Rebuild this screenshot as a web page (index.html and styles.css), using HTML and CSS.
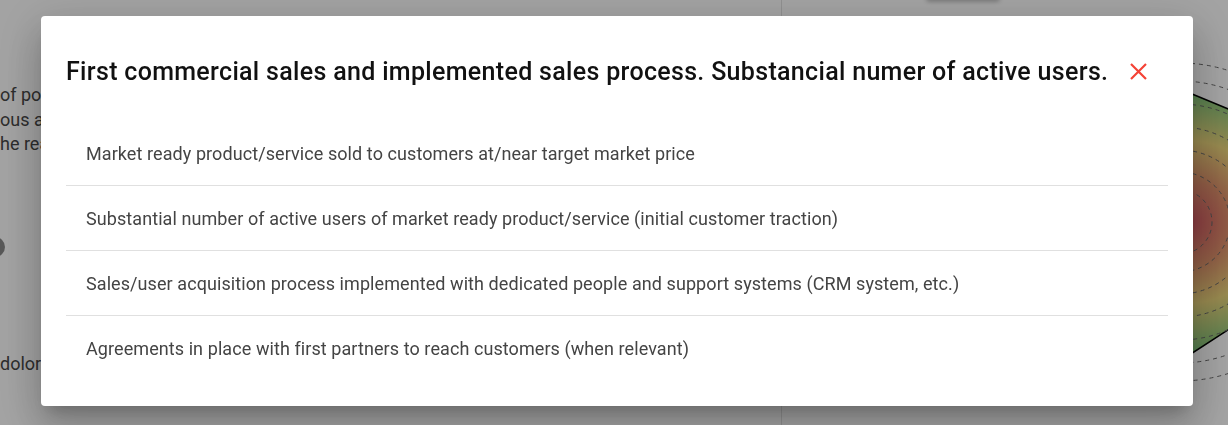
FILE: index.html
```html
<!DOCTYPE html>
<html lang="en">
<head>
<meta charset="utf-8">
<title>Milestone details</title>
<link rel="stylesheet" href="styles.css">
</head>
<body>
<div class="page">
  <section class="left">
    <div class="copy">
      <p>of power</p>
      <p>ous assets</p>
      <p>he real</p>
    </div>
    <div class="dot"></div>
    <p class="tail">dolor</p>
  </section>
  <section class="right">
    <div class="top-btn"></div>
    <svg class="radar" width="446" height="425" viewBox="0 0 446 425">
      <defs>
        <radialGradient id="heat" cx="408" cy="222" r="135" gradientUnits="userSpaceOnUse">
          <stop offset="0" stop-color="#d85a66"/>
          <stop offset="0.3" stop-color="#e0906c"/>
          <stop offset="0.6" stop-color="#ecd67c"/>
          <stop offset="1" stop-color="#72c47c"/>
        </radialGradient>
      </defs>
      <polygon points="398,89 492,128 480,308 398,361 300,300 320,140" fill="url(#heat)" stroke="#000" stroke-width="1.5"/>
      <g fill="none" stroke="#6a6a6a" stroke-width="1" stroke-dasharray="4 4">
        <circle cx="398" cy="222" r="159"/>
        <circle cx="398" cy="222" r="141"/>
        <circle cx="398" cy="222" r="118"/>
        <circle cx="398" cy="222" r="95"/>
        <circle cx="398" cy="222" r="72"/>
        <circle cx="398" cy="222" r="50"/>
        <circle cx="398" cy="222" r="32"/>
      </g>
    </svg>
  </section>
</div>

<div class="backdrop">
  <div class="dialog" role="dialog" aria-labelledby="dlg-title">
    <header class="dialog-head">
      <h2 id="dlg-title" class="dialog-title">First commercial sales and implemented sales process. Substancial numer of active users.</h2>
      <button class="close" aria-label="Close">
        <svg width="17" height="17" viewBox="0 0 17 17"><path d="M1 1 L16 16 M16 1 L1 16" stroke="#f44336" stroke-width="2.2" fill="none"/></svg>
      </button>
    </header>
    <ul class="items">
      <li>Market ready product/service sold to customers at/near target market price</li>
      <li>Substantial number of active users of market ready product/service (initial customer traction)</li>
      <li>Sales/user acquisition process implemented with dedicated people and support systems (CRM system, etc.)</li>
      <li>Agreements in place with first partners to reach customers (when relevant)</li>
    </ul>
  </div>
</div>
</body>
</html>
```

FILE: styles.css
```css
* { box-sizing: border-box; }
html, body { margin: 0; height: 100%; }
body {
  font-family: Roboto, "Noto Sans", Arial, sans-serif;
  background: #fff;
  overflow: hidden;
}

.page {
  display: flex;
  height: 425px;
}
.left {
  width: 782px;
  border-right: 1px solid #e2e2e2;
  color: #474747;
  font-size: 18px;
  white-space: nowrap;
  overflow: hidden;
}
.copy { padding-top: 83px; width: 60px; overflow: hidden; }
.copy p { margin: 0; line-height: 24.5px; }
.dot {
  width: 20px;
  height: 20px;
  border-radius: 50%;
  background: #8a8a8a;
  margin: 80px 0 0 -15px;
}
.tail { margin: 95px 0 0; line-height: 24px; width: 60px; overflow: hidden; }

.right {
  flex: 1;
  position: relative;
  overflow: hidden;
}
.top-btn {
  position: absolute;
  left: 144px;
  top: -40px;
  width: 74px;
  height: 40px;
  border-radius: 4px;
  background: #fff;
  box-shadow: 0 2px 4px rgba(0,0,0,0.25);
}
.radar { display: block; }

.backdrop {
  position: fixed;
  inset: 0;
  background: rgba(0,0,0,0.36);
  display: flex;
  align-items: flex-start;
  padding: 16px 0 0 41px;
}
.dialog {
  width: 1152px;
  height: 390px;
  background: #fff;
  border-radius: 4px;
  padding: 25px 25px 26px;
  box-shadow: 0 11px 15px -7px rgba(0,0,0,0.2), 0 24px 38px 3px rgba(0,0,0,0.14), 0 9px 46px 8px rgba(0,0,0,0.12);
}
.dialog-head {
  height: 60px;
  display: flex;
  align-items: center;
  justify-content: space-between;
  padding-right: 18px;
}
.dialog-title {
  margin: 0;
  font-size: 25px;
  font-weight: 500;
  color: #111;
  letter-spacing: 0.32px;
  white-space: nowrap;
}
.close {
  width: 24px;
  height: 24px;
  padding: 0;
  border: 0;
  background: none;
  display: flex;
  align-items: center;
  justify-content: center;
  cursor: pointer;
}
.items {
  list-style: none;
  margin: 20px 0 0;
  padding: 0;
}
.items li {
  height: 65px;
  display: flex;
  align-items: center;
  padding-left: 20px;
  font-size: 18px;
  letter-spacing: 0.08px;
  color: #444;
  border-bottom: 1px solid #e0e0e0;
}
.items li:last-child { border-bottom-color: transparent; }
```
